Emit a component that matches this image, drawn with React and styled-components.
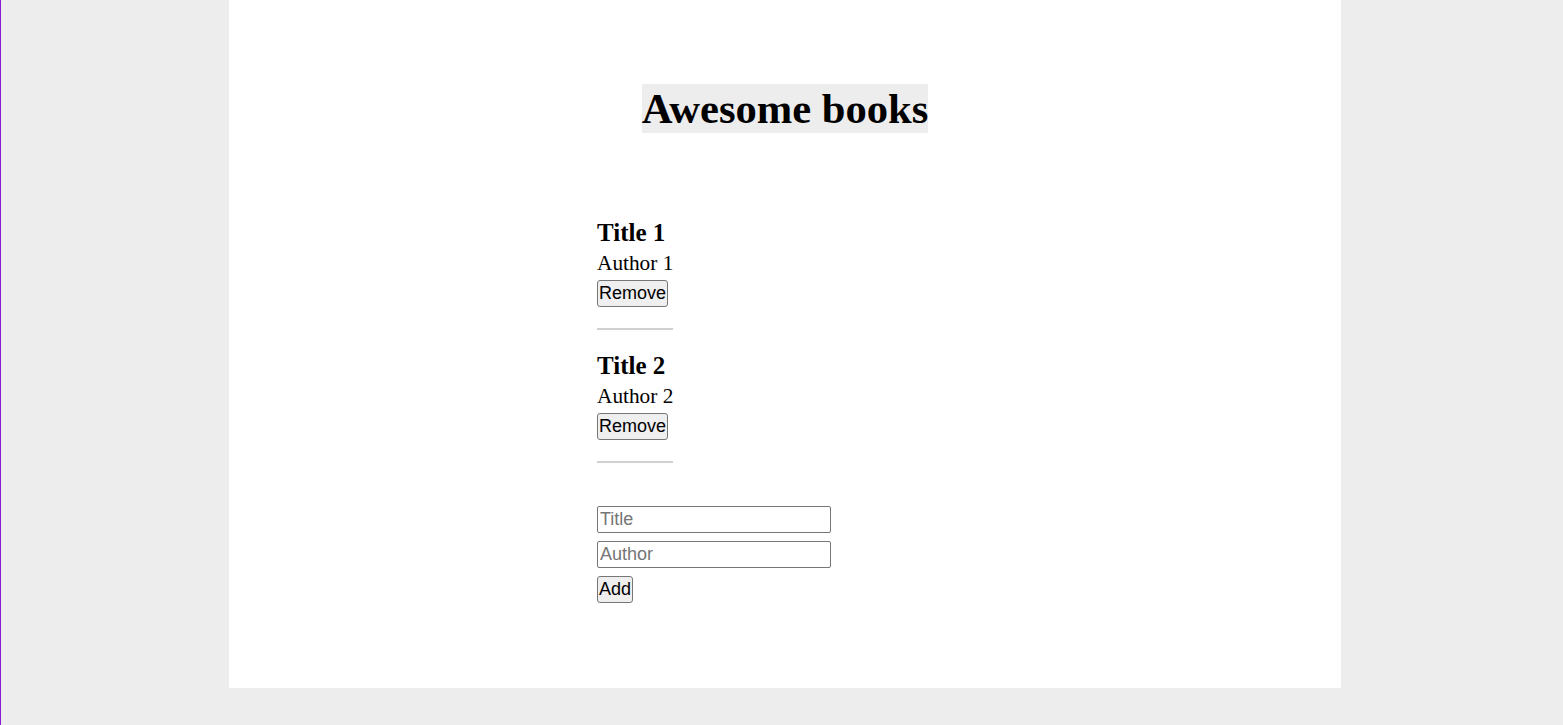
import React, { useState } from 'react'
import styled, { createGlobalStyle } from 'styled-components'

const GlobalStyle = createGlobalStyle`
  html, body {
    margin: 0;
    padding: 0;
  }

  body {
    background-color: #ededed;
    border-left: 1px solid #8b1cd4;
    min-height: 100vh;
    box-sizing: border-box;
    font-family: 'Liberation Serif', 'Times New Roman', serif;
  }
`

const initialBooks = [
  { id: 1, title: 'Title 1', author: 'Author 1' },
  { id: 2, title: 'Title 2', author: 'Author 2' },
]

export default function App() {
  const [books, setBooks] = useState(initialBooks)
  const [form, setForm] = useState({ title: '', author: '' })

  const handleChange = e => {
    setForm({ ...form, [e.target.name]: e.target.value })
  }

  const handleAdd = e => {
    e.preventDefault()
    if (!form.title || !form.author) return
    setBooks([...books, { id: Date.now(), ...form }])
    setForm({ title: '', author: '' })
  }

  const handleRemove = id => {
    setBooks(books.filter(book => book.id !== id))
  }

  return (
    <>
      <GlobalStyle />
      <Page>
        <Heading>Awesome books</Heading>
        <Content>
          <BookList>
            {books.map(book => (
              <Book key={book.id}>
                <BookTitle>{book.title}</BookTitle>
                <BookAuthor>{book.author}</BookAuthor>
                <Button type="button" onClick={() => handleRemove(book.id)}>
                  Remove
                </Button>
              </Book>
            ))}
          </BookList>
          <AddForm onSubmit={handleAdd}>
            <Input
              name="title"
              placeholder="Title"
              value={form.title}
              onChange={handleChange}
            />
            <Input
              name="author"
              placeholder="Author"
              value={form.author}
              onChange={handleChange}
            />
            <Button type="submit">Add</Button>
          </AddForm>
        </Content>
      </Page>
    </>
  )
}

const Page = styled.main`
  width: 1112px;
  height: 688px;
  margin-left: 228px;
  background-color: #fff;
  display: flex;
  flex-direction: column;
  align-items: center;
  padding-top: 84px;
  box-sizing: border-box;
`

const Heading = styled.h1`
  margin: 0;
  font-size: 42.6px;
  line-height: 49px;
  font-weight: bold;
  background-color: #ededed;
  color: #000;
`

const Content = styled.section`
  width: 376px;
  margin-top: 85px;
`

const BookList = styled.ul`
  list-style: none;
  margin: 0;
  padding: 0;
  display: flex;
  flex-direction: column;
  align-items: flex-start;
  gap: 21px;
`

const Book = styled.li`
  display: flex;
  flex-direction: column;
  align-items: flex-start;
  padding-bottom: 21px;
  border-bottom: 2px solid #d0d0d0;
`

const BookTitle = styled.h2`
  margin: 0;
  padding-top: 1px;
  font-size: 25px;
  line-height: 28px;
  font-weight: bold;
`

const BookAuthor = styled.p`
  margin: 4px 0 5px;
  font-size: 21.3px;
  line-height: 24px;
`

const Button = styled.button`
  font-family: 'Liberation Sans', Arial, sans-serif;
  font-size: 18px;
  line-height: 21px;
  padding: 2px 1px;
  color: #000;
  background-color: #efefef;
  border: 1px solid #767676;
  border-radius: 3px;
`

const AddForm = styled.form`
  display: flex;
  flex-direction: column;
  align-items: flex-start;
  gap: 8px;
  margin-top: 43px;
`

const Input = styled.input`
  width: 234px;
  height: 27px;
  box-sizing: border-box;
  font-family: 'Liberation Sans', Arial, sans-serif;
  font-size: 18px;
  padding: 1px 2px;
  border: 1px solid #767676;
  border-radius: 2px;

  &::placeholder {
    color: #757575;
  }
`
